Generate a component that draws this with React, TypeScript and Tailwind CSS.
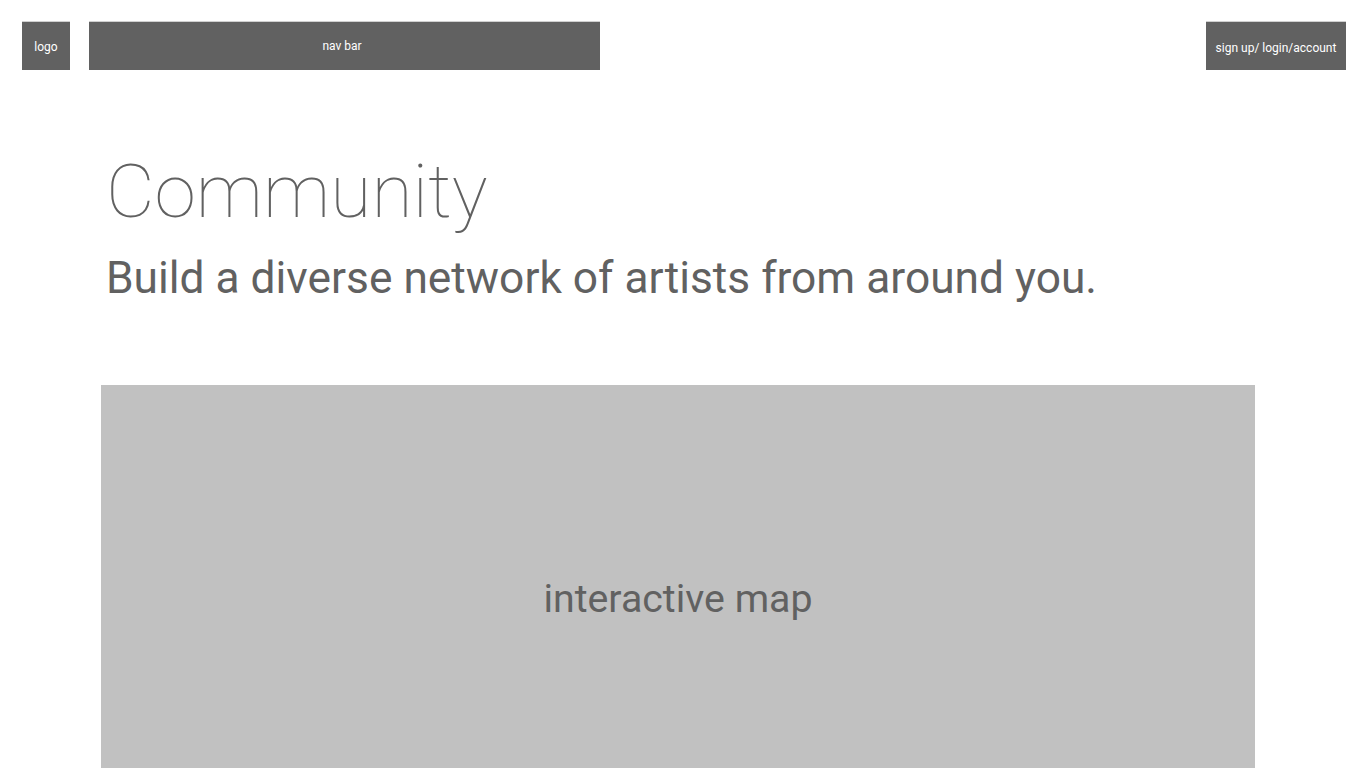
import React from "react"

export default function App() {
    return (
        <div className="min-h-screen bg-white overflow-hidden" style={{ fontFamily: "Roboto, 'Liberation Sans', sans-serif" }}>
            <header className="flex items-start justify-between pt-[21px] pl-[22px] pr-[20px]">
                <div className="flex items-start gap-[19px]">
                    <div className="w-[48px] h-[49px] bg-[#616161] border-t border-[#d0d0d0] flex items-center justify-center pt-[1px] text-white text-[12px]">logo</div>
                    <div className="w-[511px] h-[49px] bg-[#616161] border-t border-[#d0d0d0] flex items-center justify-center pr-[5px] text-white text-[12px]">nav bar</div>
                </div>
                <div className="w-[140px] h-[49px] bg-[#616161] border-t border-[#d0d0d0] flex items-center justify-center pt-[3px] text-white text-[12px]">sign up/ login/account</div>
            </header>

            <section className="pl-[106px] pt-[84px]">
                <h1 className="text-[75px] leading-[75px] font-thin text-[#616161]">Community</h1>
                <p className="mt-[23px] text-[44.3px] leading-[52px] text-[#616161]">Build a diverse network of artists from around you.</p>
            </section>

            <div className="mx-[101px] mt-[81px] w-[1154px] h-[420px] bg-[#c1c1c1] flex justify-center pt-[190px]">
                <span className="text-[39.3px] leading-[48px] text-[#616161]">interactive map</span>
            </div>
        </div>
    )
}
